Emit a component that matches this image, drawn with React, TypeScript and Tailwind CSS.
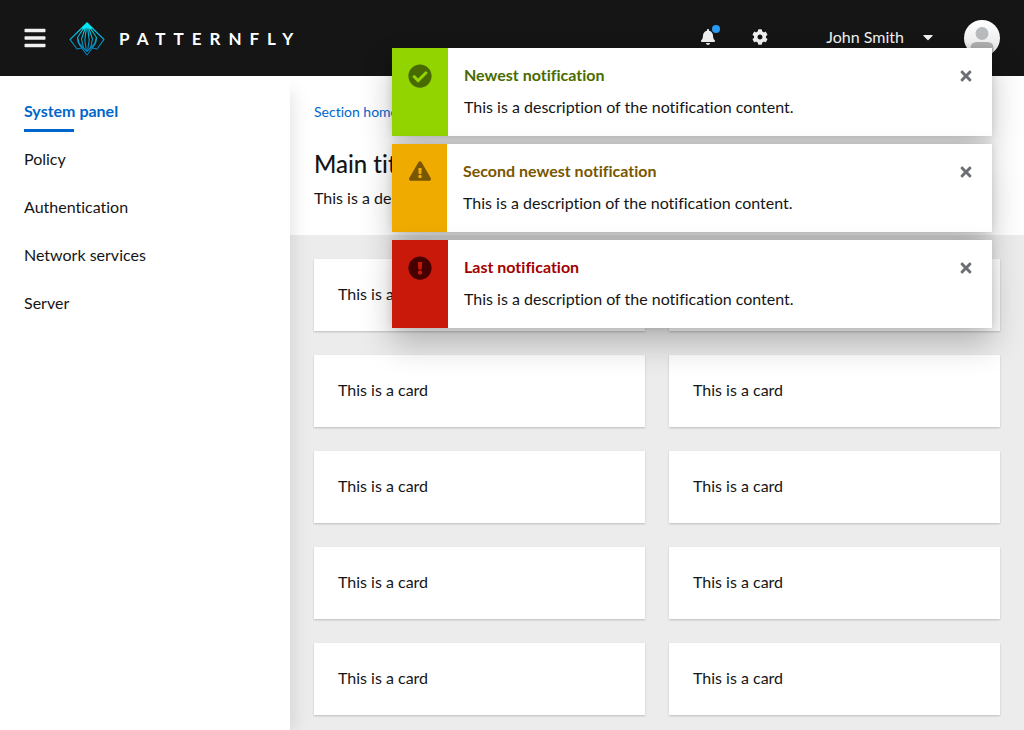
import {
  FaBars,
  FaBell,
  FaCaretDown,
  FaCheckCircle,
  FaCog,
  FaExclamationCircle,
  FaExclamationTriangle,
  FaTimes,
} from "react-icons/fa";
import type { IconType } from "react-icons";

type Notification = {
  title: string;
  icon: IconType;
  iconSize: string;
  accent: string;
  heading: string;
};

const notifications: Notification[] = [
  {
    title: "Newest notification",
    icon: FaCheckCircle,
    iconSize: "size-6",
    accent: "w-14 bg-[#92d400] text-[#486b00]",
    heading: "text-[#486b00]",
  },
  {
    title: "Second newest notification",
    icon: FaExclamationTriangle,
    iconSize: "size-[22px]",
    accent: "w-[55px] bg-[#f0ab00] text-[#795600]",
    heading: "text-[#795600]",
  },
  {
    title: "Last notification",
    icon: FaExclamationCircle,
    iconSize: "size-6",
    accent: "w-14 bg-[#c9190b] text-[#470000]",
    heading: "text-[#a30000]",
  },
];

const navItems = ["System panel", "Policy", "Authentication", "Network services", "Server"];

function Logo() {
  return (
    <svg viewBox="0 0 36 34" className="h-[34px] w-9" fill="none" aria-hidden="true">
      <defs>
        <linearGradient id="logo" x1="18" y1="0" x2="18" y2="34" gradientUnits="userSpaceOnUse">
          <stop offset="0" stopColor="#00f0ff" />
          <stop offset="0.35" stopColor="#08b8d8" />
          <stop offset="1" stopColor="#0a6db0" />
        </linearGradient>
      </defs>
      <g stroke="url(#logo)" strokeWidth="1.1" strokeLinejoin="round">
        <path d="M18 1 1 17.500 8 27l6-1.200" />
        <path d="M18 1 35 17.500 28 27l-6-1.200" />
        <path d="M18 1 8.500 15.500 10.500 23 18 33l7.500-10 2-7.500z" />
        <path d="M18 1 12.500 17 14.500 26" />
        <path d="M18 1 23.500 17 21.500 26" />
        <path d="M18 1 15.800 18 17.400 29M18 1 20.200 18 18.600 29" />
        <path d="M8.500 15.500 9.200 20.500 18 29.500l8.800-9 .7-5" />
      </g>
      <path d="m18 .5 5.500 5.300-2 1.700-3.500-2-3.500 2-2-1.700z" fill="#00e8f8" />
    </svg>
  );
}

function Avatar() {
  return (
    <svg viewBox="0 0 36 36" className="size-9" role="img" aria-label="John Smith">
      <defs>
        <clipPath id="avatar">
          <circle cx="18" cy="18" r="18" />
        </clipPath>
        <linearGradient id="avatar-bg" x1="0" y1="0" x2="0" y2="1">
          <stop offset="0" stopColor="#fff" />
          <stop offset="1" stopColor="#e6e6e6" />
        </linearGradient>
      </defs>
      <g clipPath="url(#avatar)">
        <path fill="url(#avatar-bg)" d="M0 0h36v36H0z" />
        <circle cx="18" cy="13.500" r="6.500" fill="#b8bbbe" />
        <path fill="#b1b1b1" d="M6.500 31v-3q0-6 6.500-6h10q6.500 0 6.500 6v8h-23z" />
      </g>
    </svg>
  );
}

function Header() {
  return (
    <header className="flex h-[76px] shrink-0 items-center bg-[#151515] px-6 text-[#f0f0f0]">
      <button type="button" aria-label="Toggle navigation">
        <FaBars className="size-6 -ml-px" />
      </button>
      <a href="#home" className="ml-[22px] flex items-center gap-[14px] pt-0.5 text-white">
        <Logo />
        <span className="text-[17px] leading-6 font-bold tracking-[8px]">PATTERNFLY</span>
      </a>
      <div className="ml-auto flex items-center">
        <div className="flex items-center pb-0.5">
          <button type="button" aria-label="Notifications" className="relative">
            <FaBell className="size-4" />
            <span className="absolute -top-1 -right-1 size-2 rounded-full bg-[#2b9af3]" />
          </button>
          <button type="button" aria-label="Settings" className="ml-9">
            <FaCog className="size-4" />
          </button>
          <button type="button" className="ml-[58px] flex items-center gap-4">
            John Smith
            <FaCaretDown className="size-4" />
          </button>
        </div>
        <div className="ml-7">
          <Avatar />
        </div>
      </div>
    </header>
  );
}

function Sidebar() {
  return (
    <nav className="z-10 w-[290px] shrink-0 bg-white pt-3 shadow-[12px_8px_16px_-8px_rgba(3,3,3,0.1)]">
      <ul>
        {navItems.map((item, i) => (
          <li key={item} className="h-12 px-6 py-3">
            <a
              href={`#${item}`}
              className={
                i === 0
                  ? "relative font-bold text-[#0066cc] after:absolute after:top-[28px] after:left-0 after:h-[3px] after:w-[50px] after:bg-[#0066cc]"
                  : ""
              }
            >
              {item}
            </a>
          </li>
        ))}
      </ul>
    </nav>
  );
}

function Toast({ title, icon: Icon, iconSize, accent, heading }: Notification) {
  return (
    <li className="flex h-[88px] bg-white shadow-[0_16px_32px_rgba(3,3,3,0.24),0_0_8px_rgba(3,3,3,0.12)]">
      <div className={`flex shrink-0 justify-center pt-4 ${accent}`}>
        <Icon className={iconSize} />
      </div>
      <div className="flex-1 px-4 pt-4">
        <h2 className={`font-bold ${heading}`}>{title}</h2>
        <p className="mt-[10px]">This is a description of the notification content.</p>
      </div>
      <button
        type="button"
        aria-label={`Close ${title}`}
        className="flex h-14 w-[52px] items-center justify-center text-[#6a6e73]"
      >
        <FaTimes className="size-4" />
      </button>
    </li>
  );
}

export default function App() {
  return (
    <div className="relative flex min-h-screen flex-col bg-[#ececec] font-['Lato',sans-serif] text-base leading-[22px] text-[#151515] [font-variant-ligatures:no-common-ligatures]">
      <Header />
      <div className="flex flex-1">
        <Sidebar />
        <main className="min-w-0 flex-1">
          <section className="bg-white px-6 pt-6 pb-[26px]">
            <a href="#section" className="block text-sm leading-6 text-[#0066cc]">
              Section home
            </a>
            <h1 className="mt-6 text-2xl leading-8 font-medium">Main title</h1>
            <p className="mt-[7px]">This is a description of the page.</p>
          </section>
          <section className="grid grid-cols-2 gap-6 px-6 pt-6 pb-3">
            {Array.from({ length: 10 }, (_, i) => (
              <article
                key={i}
                className="bg-white px-6 pt-6 pb-[26px] shadow-[0_1px_2px_rgba(3,3,3,0.2)]"
              >
                This is a card
              </article>
            ))}
          </section>
        </main>
      </div>
      <ul
        aria-label="Notifications"
        className="absolute top-12 right-8 z-20 flex w-[600px] max-w-full flex-col gap-2"
      >
        {notifications.map((n) => (
          <Toast key={n.title} {...n} />
        ))}
      </ul>
    </div>
  );
}
